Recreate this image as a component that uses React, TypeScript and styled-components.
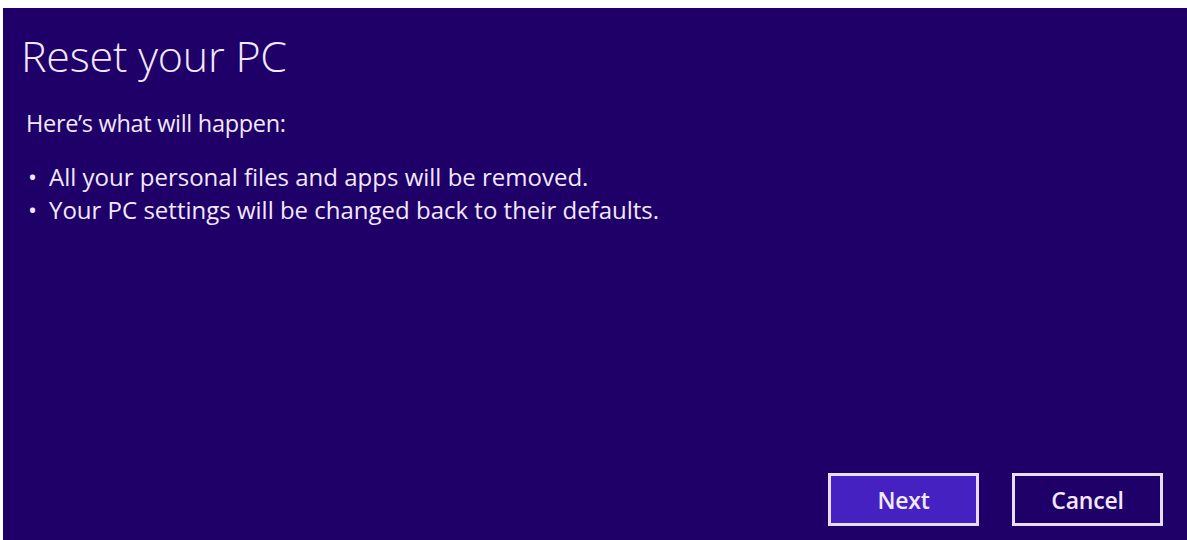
import { createGlobalStyle } from "styled-components";
import styled from "styled-components";

const GlobalStyle = createGlobalStyle`
  html, body {
    margin: 0;
    padding: 0;
    background: #ffffff;
  }
  body {
    font-family: "Open Sans", "Noto Sans", "Liberation Sans", sans-serif;
  }
`;

const Screen = styled.div`
  box-sizing: border-box;
  height: 540px;
  padding: 8px 0 0 3px;
  display: flex;
`;

const Dialog = styled.div`
  box-sizing: border-box;
  flex: 1;
  background: #1f0068;
  color: #f2e8ff;
  padding: 20px 24px 14px 17px;
  display: flex;
  flex-direction: column;
`;

const Title = styled.h1`
  margin: 0 0 0 1px;
  font-size: 43px;
  font-weight: 300;
  line-height: 56px;
  letter-spacing: -0.2px;
`;

const Intro = styled.p`
  margin: 24px 0 0 6px;
  font-size: 23.5px;
  line-height: 30px;
  letter-spacing: -0.3px;
`;

const Points = styled.ul`
  list-style: none;
  margin: 22px 0 0 6px;
  padding: 0;
`;

const Point = styled.li`
  display: flex;
  font-size: 24px;
  line-height: 33px;

  &::before {
    content: "•";
    width: 21px;
    padding-left: 2px;
  }
`;

const Footer = styled.div`
  margin-top: auto;
  display: flex;
  justify-content: flex-end;
  gap: 33px;
`;

const Button = styled.button<{ primary?: boolean }>`
  box-sizing: border-box;
  width: 151px;
  height: 53px;
  border: 3px solid #eadcff;
  background: ${(props) => (props.primary ? "#4421c0" : "#1f0068")};
  color: #f2e8ff;
  font-family: inherit;
  font-size: 23px;
  font-weight: 600;
  letter-spacing: -0.2px;
  cursor: pointer;
`;

export default function App() {
  const points = [
    "All your personal files and apps will be removed.",
    "Your PC settings will be changed back to their defaults.",
  ];

  return (
    <Screen>
      <GlobalStyle />
      <Dialog>
        <Title>Reset your PC</Title>
        <Intro>Here’s what will happen:</Intro>
        <Points>
          {points.map((text) => (
            <Point key={text}>{text}</Point>
          ))}
        </Points>
        <Footer>
          <Button primary>Next</Button>
          <Button>Cancel</Button>
        </Footer>
      </Dialog>
    </Screen>
  );
}
